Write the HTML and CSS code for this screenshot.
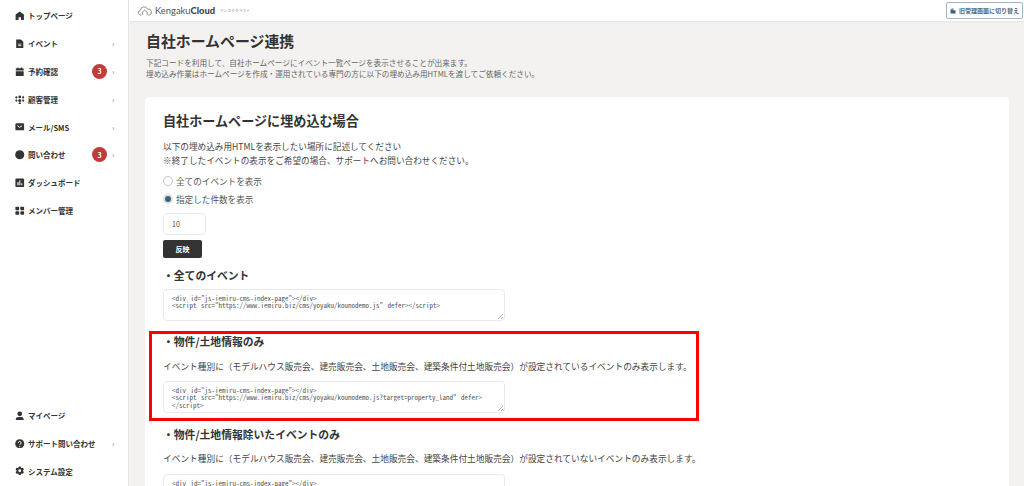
FILE: index.html
```html
<!DOCTYPE html>
<html lang="ja">
<head>
<meta charset="utf-8">
<title>自社ホームページ連携</title>
<link rel="stylesheet" href="styles.css">
</head>
<body>
<div class="app">
  <aside class="sidebar">
    <nav class="nav">
      <a class="item"><svg class="ico" viewBox="0 0 24 24"><path d="M12 1.500 1.500 9v13.500h7.500v-7h6v7h7.500V9z"/></svg><span class="label">トップページ</span></a>
      <a class="item"><svg class="ico" viewBox="0 0 24 24"><path d="M3 1h12l6 6v16H3z"/><rect x="8" y="12" width="8" height="2" fill="#fff"/><rect x="8" y="16" width="8" height="2" fill="#fff"/></svg><span class="label">イベント</span><span class="chev">›</span></a>
      <a class="item"><svg class="ico" viewBox="0 0 24 24"><path d="M2 5a2 2 0 0 1 2-2h2V1h3v2h6V1h3v2h2a2 2 0 0 1 2 2v4H2zM2 11h20v10a2 2 0 0 1-2 2H4a2 2 0 0 1-2-2z"/></svg><span class="label">予約確認</span><span class="badge">3</span><span class="chev">›</span></a>
      <a class="item"><svg class="ico" viewBox="0 0 24 24"><circle cx="3.500" cy="6" r="2.800"/><circle cx="12" cy="5" r="3.500"/><circle cx="20.500" cy="6" r="2.800"/><circle cx="3.500" cy="14" r="2.800"/><circle cx="12" cy="14" r="3.800"/><circle cx="20.500" cy="14" r="2.800"/><circle cx="12" cy="21" r="2.800"/></svg><span class="label">顧客管理</span><span class="chev">›</span></a>
      <a class="item"><svg class="ico" viewBox="0 0 24 24"><rect x="1" y="3" width="22" height="18" rx="3"/><path d="m6 9 6 4.500L18 9" fill="none" stroke="#fff" stroke-width="2.400"/></svg><span class="label">メール/SMS</span><span class="chev">›</span></a>
      <a class="item"><svg class="ico" viewBox="0 0 24 24"><circle cx="12" cy="12" r="11.500"/></svg><span class="label">問い合わせ</span><span class="badge">3</span><span class="chev">›</span></a>
      <a class="item"><svg class="ico" viewBox="0 0 24 24"><rect x="1" y="1" width="22" height="22" rx="3"/><path d="M6 11h3v7H6zM11 6h2.500v12H11zM16 13h2.500v5H16z" fill="#fff"/></svg><span class="label">ダッシュボード</span></a>
      <a class="item"><svg class="ico" viewBox="0 0 24 24"><rect x="1" y="2" width="9.500" height="9" rx="2"/><rect x="13.500" y="2" width="9.500" height="9" rx="2"/><rect x="1" y="13" width="9.500" height="9" rx="2"/><rect x="13.500" y="13" width="9.500" height="9" rx="2"/></svg><span class="label">メンバー管理</span></a>
    </nav>
    <nav class="nav">
      <a class="item"><svg class="ico" viewBox="0 0 24 24"><circle cx="12" cy="7" r="6"/><path d="M2 23v-3a6 6 0 0 1 6-5h8a6 6 0 0 1 6 5v3z"/></svg><span class="label">マイページ</span></a>
      <a class="item"><svg class="ico" viewBox="0 0 24 24"><circle cx="12" cy="12" r="11.500"/><path d="M8.500 9.500a3.500 3.500 0 1 1 5.500 3c-1.300.9-2 1.400-2 3" fill="none" stroke="#fff" stroke-width="2.400"/><circle cx="12" cy="19" r="1.600" fill="#fff"/></svg><span class="label">サポート問い合わせ</span><span class="chev">›</span></a>
      <a class="item"><svg class="ico" viewBox="0 0 24 24"><path d="M9.500 1h5l.7 3.200 1.900 1.100 3.100-1 2.500 4.300-2.400 2.200v2.400l2.400 2.200-2.500 4.300-3.100-1-1.900 1.100-.7 3.200h-5l-.7-3.200-1.900-1.100-3.100 1L1.300 15.400l2.400-2.200v-2.400L1.300 8.600l2.500-4.300 3.100 1 1.900-1.100z"/><circle cx="12" cy="12" r="3.500" fill="#fff"/></svg><span class="label">システム設定</span></a>
    </nav>
  </aside>
  <div class="body">
    <header class="topbar">
      <div class="brand">
        <svg class="logo" viewBox="0 0 26 18"><path d="M6 16.500H5a4.500 4.500 0 0 1-.6-8.900 7 7 0 0 1 13.400-2A5 5 0 0 1 21 16.500h-2" fill="none" stroke="#666" stroke-width="1.300"/><path d="M8 16.500V11l4.500-3.500L17 11v5.500" fill="none" stroke="#666" stroke-width="1.300"/></svg>
        <span class="brand-name">Kengaku<b>Cloud</b></span>
        <span class="brand-kana">ケンガククラウド</span>
      </div>
      <button class="switch"><svg class="switch-ico" viewBox="0 0 12 12"><path d="M1 3h4l1 1.500h5V11H1z"/><path d="M3 1h4v2H3z"/></svg>旧管理画面に切り替え</button>
    </header>
    <main class="main">
      <h1 class="title">自社ホームページ連携</h1>
      <p class="lead">下記コードを利用して、自社ホームページにイベント一覧ページを表示させることが出来ます。<br>埋め込み作業はホームページを作成・運用されている専門の方に以下の埋め込み用HTMLを渡してご依頼ください。</p>
      <section class="card">
        <h2 class="card-title">自社ホームページに埋め込む場合</h2>
        <p class="text">以下の埋め込み用HTMLを表示したい場所に記述してください<br>※終了したイベントの表示をご希望の場合、サポートへお問い合わせください。</p>
        <label class="radio"><span class="dot"></span>全てのイベントを表示</label>
        <label class="radio"><span class="dot on"></span>指定した件数を表示</label>
        <div class="num">10</div>
        <button class="apply">反映</button>
        <h3 class="sub first">・全てのイベント</h3>
        <textarea class="code" readonly>&lt;div id="js-iemiru-cms-index-page"&gt;&lt;/div&gt;
&lt;script src="https://www.iemiru.biz/cms/yoyaku/kounodemo.js" defer&gt;&lt;/script&gt;</textarea>
        <h3 class="sub">・物件/土地情報のみ</h3>
        <p class="note">イベント種別に（モデルハウス販売会、建売販売会、土地販売会、建築条件付土地販売会）が設定されているイベントのみ表示します。</p>
        <textarea class="code" readonly>&lt;div id="js-iemiru-cms-index-page"&gt;&lt;/div&gt;
&lt;script src="https://www.iemiru.biz/cms/yoyaku/kounodemo.js?target=property_land" defer&gt;
&lt;/script&gt;</textarea>
        <h3 class="sub">・物件/土地情報除いたイベントのみ</h3>
        <p class="note">イベント種別に（モデルハウス販売会、建売販売会、土地販売会、建築条件付土地販売会）が設定されていないイベントのみ表示します。</p>
        <textarea class="code" readonly>&lt;div id="js-iemiru-cms-index-page"&gt;&lt;/div&gt;</textarea>
      </section>
    </main>
  </div>
  <div class="annotation"></div>
</div>
</body>
</html>
```
FILE: styles.css
```css
* { box-sizing: border-box; }
html, body { margin: 0; height: 100%; overflow: hidden; }
body { font-family: "Noto Sans CJK JP", "Noto Sans", sans-serif; color: #333; background: #f3f2f0; }
.app { position: relative; display: flex; width: 1024px; height: 486px; overflow: hidden; }
.sidebar { width: 129px; flex: none; background: #fff; border-right: 1px solid #e6e6e6; display: flex; flex-direction: column; justify-content: space-between; padding: 2px 0 1px; }
.nav { display: flex; flex-direction: column; }
.item { height: 27.8px; display: flex; align-items: center; padding: 0 13px 0 15px; font-size: 7.5px; font-weight: 700; color: #333; }
.ico { width: 9.5px; height: 9.5px; fill: #333; flex: none; margin-right: 3.5px; }
.label { flex: 1; white-space: nowrap; }
.badge { width: 15px; height: 15px; border-radius: 50%; background: #c23b3b; color: #fff; font-size: 7px; display: flex; align-items: center; justify-content: center; margin-right: 3px; }
.chev { font-size: 8px; color: #888; font-weight: 400; width: 3px; margin-left: 2px; }
.body { flex: 1; min-width: 0; display: flex; flex-direction: column; }
.topbar { height: 21px; flex: none; background: #fff; box-shadow: 0 1px 2px rgba(0,0,0,.06); display: flex; align-items: center; justify-content: space-between; padding: 0 1px 0 9px; position: relative; }
.brand { display: flex; align-items: center; }
.logo { width: 14px; height: 10px; margin-right: 3px; }
.brand-name { font-family: "Lato", sans-serif; font-size: 9.4px; color: #555; }
.brand-name b { color: #444; font-weight: 900; }
.brand-kana { font-size: 3.4px; color: #777; margin-left: 5px; letter-spacing: .4px; }
.switch { height: 17px; width: 77px; padding: 0; border: 1px solid #9db8cc; border-radius: 2px; background: #fff; color: #4c6a82; font-family: inherit; font-size: 6px; font-weight: 700; display: flex; align-items: center; justify-content: center; white-space: nowrap; }
.switch-ico { width: 6px; height: 6px; fill: #3f5f78; margin-right: 3px; }
.main { flex: 1; min-height: 0; padding: 9px 15px 0 16px; overflow: hidden; }
.title { margin: 0 0 0 1px; font-size: 14.9px; line-height: 21px; font-weight: 700; color: #333; }
.lead { margin: 6px 0 0 1px; font-size: 7.63px; line-height: 11px; color: #666; }
.card { margin-top: 18px; background: #fff; border-radius: 4px; padding: 14px 18px 40px; }
.card-title { margin: 0; font-size: 13.1px; line-height: 20px; font-weight: 700; color: #333; }
.text { margin: 7.5px 0 0; font-size: 8.65px; line-height: 14px; color: #444; }
.radio { display: flex; align-items: center; height: 18px; font-size: 8.6px; color: #555; }
.text + .radio { margin-top: 5px; }
.dot { width: 10px; height: 10px; border-radius: 50%; border: 1px solid #c9c6c0; margin-right: 3px; background: #fff; }
.dot.on { border: 2px solid #e4e2de; background: #3b6483; }
.num { margin-top: 5px; width: 43px; height: 22px; border: 1px solid #eceae6; border-radius: 4px; padding: 0 8px; font-size: 7px; line-height: 20px; color: #444; }
.apply { display: block; margin-top: 5px; width: 39px; height: 18px; padding: 0; border: 0; border-radius: 2px; background: #333; color: #fff; font-family: inherit; font-size: 7px; font-weight: 700; }
.sub { margin: 12.5px 0 0; font-size: 10.8px; line-height: 16px; font-weight: 700; color: #333; }
.sub.first { margin-top: 9px; }
.note { margin: 10.5px 0 0; font-size: 8.7px; line-height: 13px; color: #444; white-space: nowrap; }
.code { display: block; width: 342px; height: 32px; margin: 6px 0 0; padding: 5px 8px; border: 1px solid #eceae6; border-radius: 4px; background: #fff; font-family: "Noto Sans Mono CJK JP", "Liberation Mono", monospace; font-size: 7px; line-height: 7.3px; word-spacing: 1px; color: #555; resize: vertical; overflow: hidden; white-space: pre; outline: none; }
.code::-webkit-resizer { background: linear-gradient(135deg, transparent 45%, #b5b5b5 45%, #b5b5b5 58%, transparent 58%, transparent 72%, #b5b5b5 72%, #b5b5b5 85%, transparent 85%) right 1px bottom 1px / 5px 5px no-repeat; }
.note + .code { margin-top: 8.5px; }
.annotation { position: absolute; left: 149px; top: 331px; width: 550px; height: 90px; border: 3px solid #f00; }
```
